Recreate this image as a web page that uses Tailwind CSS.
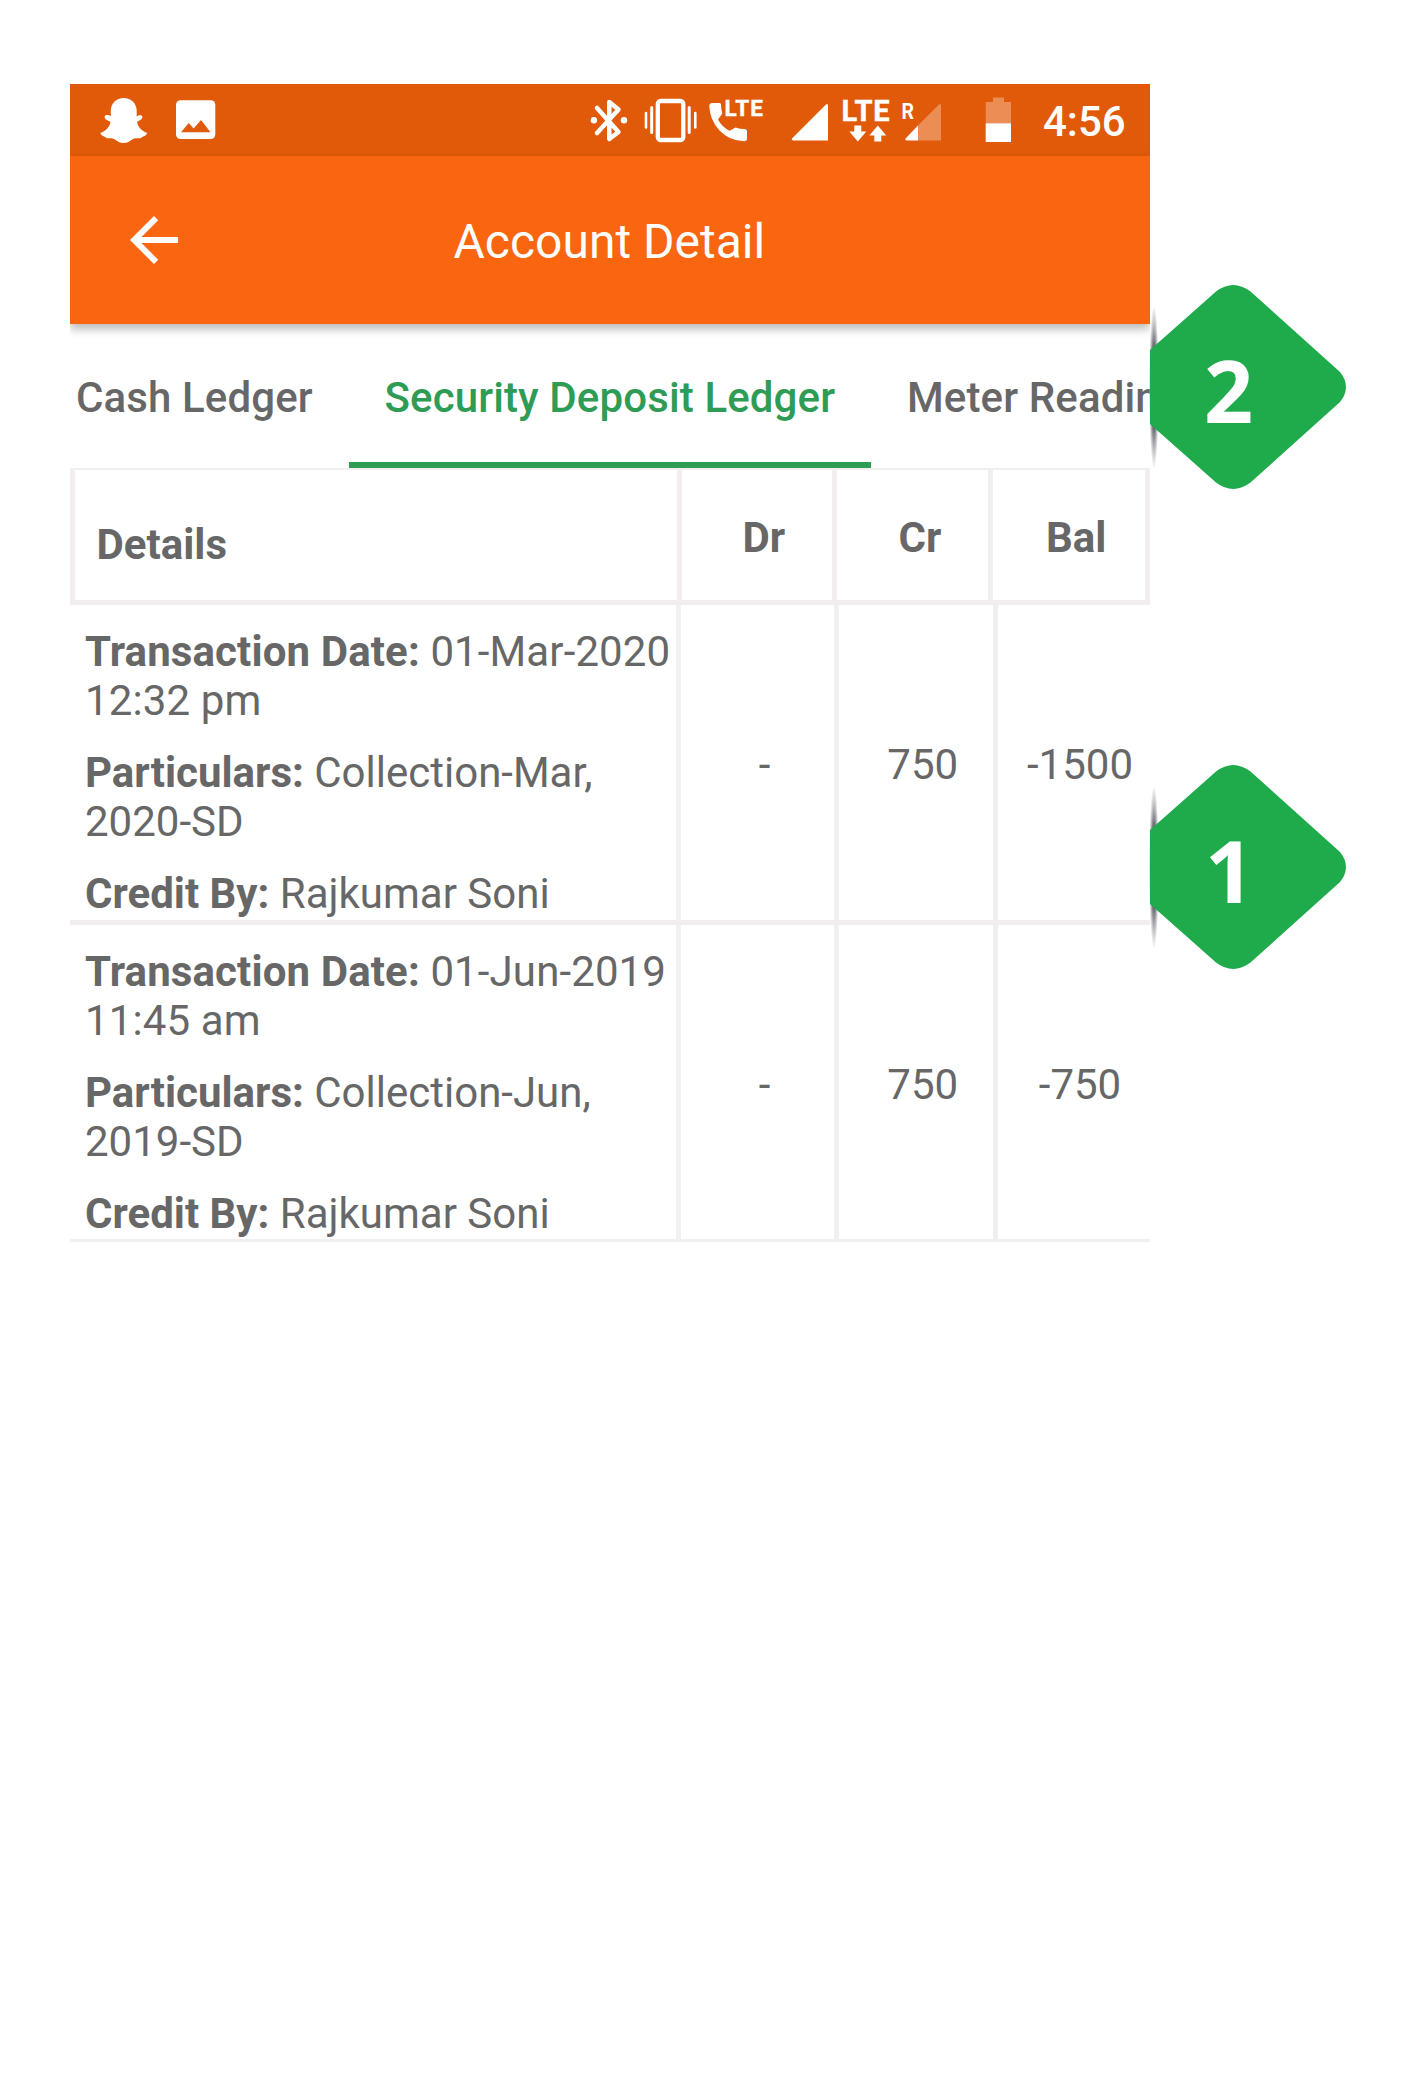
<!DOCTYPE html>
<html lang="en">
<head>
<meta charset="utf-8">
<title>Account Detail</title>
<script src="https://cdn.jsdelivr.net/npm/@tailwindcss/browser@4"></script>
</head>
<body class="relative h-[2087px] w-[1422px] overflow-hidden bg-white pt-[84px] pl-[70px] font-['Roboto',sans-serif] text-[42px] leading-[49px] text-[#676767]">
<main class="w-[1079.5px] overflow-hidden">
  <!-- status bar -->
  <div class="flex h-[72px] items-center bg-[#e05a0a] pl-[28px] text-white">
    <svg class="h-[72px] w-[52px]" viewBox="98 84 52 72" fill="currentColor"><path d="M123.700 98C131 98 136.500 103 136.700 110.500L136.700 116.500C138.500 114.800 142.400 114.500 142.400 117C142.400 119.500 139.500 120.300 137.200 121.800C137.500 127 142 131.200 147.300 133C146.500 135.500 144 136 141.500 137.500C139.500 139.500 136 137 132.500 139.300C129.500 141.500 127.500 143 123.700 143C120 143 117.500 141.500 114.500 139.300C111 137 107.500 139.500 106 137.500C103.500 136 101 135.500 100.300 133C105.500 131.200 110 127 110.400 121.800C107.500 120.300 104.600 119.500 104.600 117C104.600 114.500 108.600 114.500 110.800 116.500L110.800 110.500C111 103 116.500 98 123.700 98Z"/></svg>
    <svg class="ml-[24px] h-[72px] w-[44px]" viewBox="174 84 44 72"><rect x="176" y="100.300" width="39.300" height="38.700" rx="4.500" fill="currentColor"/><path d="M181 132.300L188.700 123L193.700 128.500L201 120L210.500 132.300Z" fill="#e05a0a"/></svg>
    <svg class="ml-[371px] h-[72px] w-[40px]" viewBox="589 84 40 72" fill="none" stroke="currentColor" stroke-width="4.500" stroke-linejoin="round" stroke-linecap="round"><path d="M597 108L618.500 132L609.300 139V102L618.500 109.500L597 133"/><circle cx="593.900" cy="120.300" r="3.200" fill="currentColor" stroke="none"/><circle cx="624" cy="120.300" r="3.200" fill="currentColor" stroke="none"/></svg>
    <svg class="ml-[13px] h-[72px] w-[56px]" viewBox="642 84 56 72" fill="none" stroke="currentColor"><rect x="657.800" y="101" width="25.500" height="39" rx="3" stroke-width="4.300"/><path stroke-width="3" stroke-linecap="round" d="M651.700 107.500V132.500M689.200 107.500V132.500"/><path stroke-width="2.600" stroke-linecap="round" d="M646 113V127.500M695.300 113V127.500"/></svg>
    <svg class="ml-[9px] h-[72px] w-[58px]" viewBox="707 84 58 72" fill="currentColor"><path d="M709.300 106Q709.300 103 712.500 103H719.500Q721 103 721 104.500Q721 109 722.300 113.500L718 119.500Q722 127 729.500 130.800L735.500 127.500Q740 129 744.500 129Q747 129 747 131.500V138.500Q747 141.200 744 141.200Q729.500 141 719.500 130.500Q709.800 120 709.300 106Z"/><text x="724.500" y="116" font-size="22.500" font-weight="700" stroke="currentColor" stroke-width=".4" textLength="38.500" lengthAdjust="spacing">LTE</text></svg>
    <svg class="ml-[24px] h-[72px] w-[40px]" viewBox="789 84 40 72" fill="currentColor"><path d="M825 105.500Q828 102.500 828 106V140.500H794Q790 140.500 793 137.500Z"/></svg>
    <svg class="ml-[12px] h-[72px] w-[50px]" viewBox="841 84 50 72" fill="currentColor"><text x="841.500" y="121" font-size="29" font-weight="700" stroke="currentColor" stroke-width=".4" textLength="48" lengthAdjust="spacing">LTE</text><path d="M854.300 125.500H861.300V131.500H866.300L857.800 141.500L849.300 131.500H854.300ZM874.300 141.500H881.300V135.500H886.300L877.800 125.500L869.300 135.500H874.300Z"/></svg>
    <svg class="ml-[9px] h-[72px] w-[42px]" viewBox="900 84 42 72" fill="currentColor"><text x="901.500" y="119.200" font-size="22.500" font-weight="700" textLength="12.500" lengthAdjust="spacingAndGlyphs">R</text><path fill="#ec8d55" d="M938 105.500Q941 102.500 941 106V140.500H918V125.500Z"/><path d="M918 125.500V140.500H907.500Q903.500 140.500 906.500 137.500Z"/></svg>
    <svg class="ml-[42px] h-[72px] w-[28px]" viewBox="984 84 28 72" fill="currentColor"><path fill="#ec8d55" d="M993 97.500H1004V102H1011V123.500H985.700V102H993Z"/><path d="M985.700 123.300H1011V142H985.700Z"/></svg>
    <span class="ml-[31px] pt-[2px] font-medium">4:56</span>
  </div>

  <!-- app bar -->
  <header class="relative z-10 flex h-[168px] items-center bg-[#fa6510] pl-[48px] text-white shadow-[0_5px_9px_rgba(0,0,0,0.28)]">
    <svg class="size-[72px]" viewBox="0 0 24 24" fill="currentColor"><path d="M20 11H7.830l5.590-5.590L12 4l-8 8 8 8 1.410-1.410L7.830 13H20v-2z"/></svg>
    <h1 class="ml-[263.500px] pt-[3px] text-[48px] leading-[56px]">Account Detail</h1>
  </header>

  <!-- tabs -->
  <nav class="flex h-[144px] font-medium tracking-[0.120px] whitespace-nowrap">
    <div class="w-[279px] shrink-0 pt-[49px] pl-[6px]">Cash Ledger</div>
    <div class="w-[522px] shrink-0 border-b-[6px] border-[#2f9c56] pt-[49px] pl-[35.500px] text-[#2f9c56]">Security Deposit Ledger</div>
    <div class="shrink-0 pt-[49px] pl-[36px]">Meter Reading</div>
  </nav>

  <!-- ledger -->
  <div class="grid h-[137px] grid-cols-[611.500px_155.500px_155.500px_157px] border-t-2 border-b-[5px] border-[#f2eeef] font-bold">
    <div class="border-x-[5px] border-[#f2eeef] pt-[50px] pl-[21.500px]">Details</div>
    <div class="border-r-[5px] border-[#f2eeef] pt-[43px] pl-[61px]">Dr</div>
    <div class="border-r-[5px] border-[#f2eeef] pt-[43px] pl-[61.500px]">Cr</div>
    <div class="border-r-[5px] border-[#f2eeef] pt-[43px] pl-[53.500px]">Bal</div>
  </div>
  <div class="grid h-[320px] grid-cols-[611px_158px_158.500px_152px] border-b-[5px] border-[#f2eeef]">
    <div class="flex flex-col gap-[23px] border-r-[5px] border-[#f1f0f0] pt-[22px] pl-[15px] whitespace-nowrap">
      <p class="tracking-[0.120px]"><b>Transaction Date:</b> 01-Mar-2020<br>12:32 pm</p>
      <p><b>Particulars:</b> Collection-Mar,<br>2020-SD</p>
      <p><b>Credit By:</b> Rajkumar Soni</p>
    </div>
    <div class="border-r-[5px] border-[#f1f0f0] pt-[135px] pl-[14px] text-center">-</div>
    <div class="border-r-[5px] border-[#f2edef] pt-[135px] pl-[14px] text-center">750</div>
    <div class="pt-[135px] pl-[13px] text-center">-1500</div>
  </div>
  <div class="grid h-[317px] grid-cols-[611px_158px_158.500px_152px] border-b-[3px] border-[#f1f0f0]">
    <div class="flex flex-col gap-[23px] border-r-[5px] border-[#f1f0f0] pt-[22px] pl-[15px] whitespace-nowrap">
      <p class="tracking-[0.120px]"><b>Transaction Date:</b> 01-Jun-2019<br>11:45 am</p>
      <p><b>Particulars:</b> Collection-Jun,<br>2019-SD</p>
      <p><b>Credit By:</b> Rajkumar Soni</p>
    </div>
    <div class="border-r-[5px] border-[#f1f0f0] pt-[135px] pl-[14px] text-center">-</div>
    <div class="border-r-[5px] border-[#f2edef] pt-[135px] pl-[14px] text-center">750</div>
    <div class="pt-[135px] pl-[13px] text-center">-750</div>
  </div>
</main>

<!-- callout markers -->
<div class="absolute top-[285px] left-[1146px] h-[204px] w-[200px] font-['Open_Sans',sans-serif] text-[86px] leading-[119px] font-bold text-white">
  <div class="absolute top-[20px] left-[2.500px] h-[164px] w-[10px] bg-[radial-gradient(closest-side,#35383d_0%,#54585e_45%,#babcbe_75%,transparent_100%)]"></div>
  <svg class="absolute inset-0" width="200" height="204" viewBox="0 0 200 204" fill="#1faa4b"><path d="M4 65L70 6.500Q87.300-6.500 104.500 6.500L194 87Q206 102 194 117L104.500 197.500Q87.300 210.500 70 197.500L4 139Z"/></svg>
  <span class="absolute top-[45px] left-[58px]">2</span>
</div>
<div class="absolute top-[765px] left-[1146px] h-[204px] w-[200px] font-['Open_Sans',sans-serif] text-[86px] leading-[119px] font-bold text-white">
  <div class="absolute top-[20px] left-[2.500px] h-[164px] w-[10px] bg-[radial-gradient(closest-side,#35383d_0%,#54585e_45%,#babcbe_75%,transparent_100%)]"></div>
  <svg class="absolute inset-0" width="200" height="204" viewBox="0 0 200 204" fill="#1faa4b"><path d="M4 65L70 6.500Q87.300-6.500 104.500 6.500L194 87Q206 102 194 117L104.500 197.500Q87.300 210.500 70 197.500L4 139Z"/></svg>
  <span class="absolute top-[45px] left-[59px]">1</span>
</div>
</body>
</html>
